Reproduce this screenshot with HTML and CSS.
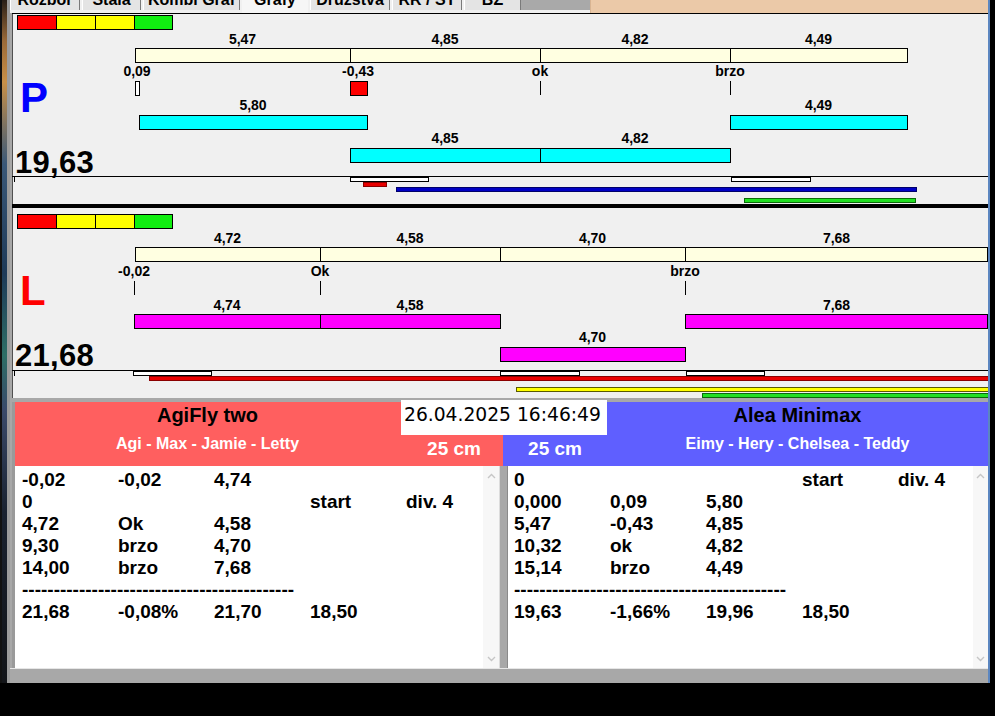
FILE: index.html
```html
<!DOCTYPE html>
<html lang="cs">
<head>
<meta charset="utf-8">
<title>Grafy</title>
<link rel="stylesheet" href="styles.css">
</head>
<body>
<div class="screen">
  <div class="desk"></div>
  <div class="win">
    <div class="tabs">
      <div class="tab w-rozbor"><span>Rozbor</span></div>
      <div class="tab w-stala"><span>Stala</span></div>
      <div class="tab w-kombi"><span>Kombi Graf</span></div>
      <div class="tab w-grafy on"><span>Grafy</span></div>
      <div class="tab w-druz"><span>Družstva</span></div>
      <div class="tab w-rr"><span>RR / ST</span></div>
      <div class="tab w-bz"><span>BZ</span></div>
      <div class="tab-gray"></div>
      <div class="tab-peach"></div>
    </div>

    <div class="charts">
      <div class="panel panel-p">
        <div class="legend"><i class="lg r"></i><i class="lg y"></i><i class="lg y"></i><i class="lg g"></i></div>

        <span class="lbl l1" style="left:230.5px">5,47</span>
        <span class="lbl l1" style="left:433px">4,85</span>
        <span class="lbl l1" style="left:623px">4,82</span>
        <span class="lbl l1" style="left:806.5px">4,49</span>
        <div class="bar cream scale" style="left:123px;width:216px"></div>
        <div class="bar cream scale" style="left:338px;width:191px"></div>
        <div class="bar cream scale" style="left:528px;width:191px"></div>
        <div class="bar cream scale" style="left:718px;width:178px"></div>

        <span class="lbl l2" style="left:125px">0,09</span>
        <span class="lbl l2" style="left:346px">-0,43</span>
        <span class="lbl l2" style="left:528px">ok</span>
        <span class="lbl l2" style="left:718px">brzo</span>
        <div class="bar mark white" style="left:123px;width:5px"></div>
        <div class="bar mark red" style="left:338px;width:18px"></div>
        <div class="tick mark" style="left:528px"></div>
        <div class="tick mark" style="left:718px"></div>

        <div class="side-letter">P</div>

        <span class="lbl l3" style="left:241px">5,80</span>
        <span class="lbl l3" style="left:806.5px">4,49</span>
        <div class="bar cyan ra" style="left:127px;width:229px"></div>
        <div class="bar cyan ra" style="left:718px;width:178px"></div>

        <span class="lbl l4" style="left:433px">4,85</span>
        <span class="lbl l4" style="left:623px">4,82</span>
        <div class="bar cyan rb" style="left:338px;width:191px"></div>
        <div class="bar cyan rb" style="left:528px;width:191px"></div>

        <div class="total">19,63</div>

        <div class="baseline"></div>
        <div class="base-tick"></div>
        <div class="slot" style="left:338px;width:79px"></div>
        <div class="slot" style="left:719px;width:80px"></div>
        <div class="run run-red lane1" style="left:351px;width:24px"></div>
        <div class="run run-blue lane2" style="left:384px;width:521px"></div>
        <div class="run run-green lane4" style="left:732px;width:172px"></div>
      </div>

      <div class="thick"></div>

      <div class="panel panel-l">
        <div class="legend"><i class="lg r"></i><i class="lg y"></i><i class="lg y"></i><i class="lg g"></i></div>

        <span class="lbl l1" style="left:215.5px">4,72</span>
        <span class="lbl l1" style="left:398px">4,58</span>
        <span class="lbl l1" style="left:580.5px">4,70</span>
        <span class="lbl l1" style="left:824.5px">7,68</span>
        <div class="bar cream scale" style="left:123px;width:186px"></div>
        <div class="bar cream scale" style="left:308px;width:181px"></div>
        <div class="bar cream scale" style="left:488px;width:186px"></div>
        <div class="bar cream scale" style="left:673px;width:303px"></div>

        <span class="lbl l2" style="left:122px">-0,02</span>
        <span class="lbl l2" style="left:308px">Ok</span>
        <span class="lbl l2" style="left:673px">brzo</span>
        <div class="tick mark" style="left:122px"></div>
        <div class="tick mark" style="left:308px"></div>
        <div class="tick mark" style="left:673px"></div>

        <div class="side-letter">L</div>

        <span class="lbl l3" style="left:215px">4,74</span>
        <span class="lbl l3" style="left:398px">4,58</span>
        <span class="lbl l3" style="left:824.5px">7,68</span>
        <div class="bar magenta ra" style="left:122px;width:187px"></div>
        <div class="bar magenta ra" style="left:308px;width:181px"></div>
        <div class="bar magenta ra" style="left:673px;width:303px"></div>

        <span class="lbl l4" style="left:580.5px">4,70</span>
        <div class="bar magenta rb" style="left:488px;width:186px"></div>

        <div class="total">21,68</div>

        <div class="baseline"></div>
        <div class="base-tick"></div>
        <div class="slot" style="left:121px;width:79px"></div>
        <div class="slot" style="left:488px;width:80px"></div>
        <div class="slot" style="left:674px;width:79px"></div>
        <div class="run run-red lane1" style="left:137px;width:845px"></div>
        <div class="run run-yellow lane3" style="left:504px;width:478px"></div>
        <div class="run run-green lane5" style="left:690px;width:292px"></div>
      </div>
    </div>

    <div class="gap"></div>

    <div class="bottom">
      <div class="heads">
        <div class="head head-red">
          <div class="head-title">
            <div class="team">AgiFly two</div>
            <div class="dogs">Agi - Max - Jamie - Letty</div>
          </div>
          <div class="head-cm">25 cm</div>
        </div>
        <div class="head head-blue">
          <div class="head-cm">25 cm</div>
          <div class="head-title">
            <div class="team">Alea Minimax</div>
            <div class="dogs">Eimy - Hery - Chelsea - Teddy</div>
          </div>
        </div>
        <div class="stamp">26.04.2025 16:46:49</div>
      </div>

      <div class="lists">
        <div class="list list-l">
          <div class="list-body">
            <div class="row"><span class="c">-0,02</span><span class="c">-0,02</span><span class="c">4,74</span></div>
            <div class="row"><span class="c">0</span><span class="c"></span><span class="c"></span><span class="c">start</span><span class="c">div. 4</span></div>
            <div class="row"><span class="c">4,72</span><span class="c">Ok</span><span class="c">4,58</span></div>
            <div class="row"><span class="c">9,30</span><span class="c">brzo</span><span class="c">4,70</span></div>
            <div class="row"><span class="c">14,00</span><span class="c">brzo</span><span class="c">7,68</span></div>
            <div class="row"><span class="dash">-------------------------------------------</span></div>
            <div class="row"><span class="c">21,68</span><span class="c">-0,08%</span><span class="c">21,70</span><span class="c">18,50</span></div>
          </div>
          <div class="scroll scroll-l">
            <svg width="9" height="6" viewBox="0 0 9 6"><polyline points="1,5 4.5,1.5 8,5" fill="none" stroke="#c6c6c6" stroke-width="1.4"/></svg>
            <svg width="9" height="6" viewBox="0 0 9 6"><polyline points="1,1 4.5,4.5 8,1" fill="none" stroke="#c6c6c6" stroke-width="1.4"/></svg>
          </div>
        </div>
        <div class="list-sep"></div>
        <div class="list list-r">
          <div class="list-body">
            <div class="row"><span class="c">0</span><span class="c"></span><span class="c"></span><span class="c">start</span><span class="c">div. 4</span></div>
            <div class="row"><span class="c">0,000</span><span class="c">0,09</span><span class="c">5,80</span></div>
            <div class="row"><span class="c">5,47</span><span class="c">-0,43</span><span class="c">4,85</span></div>
            <div class="row"><span class="c">10,32</span><span class="c">ok</span><span class="c">4,82</span></div>
            <div class="row"><span class="c">15,14</span><span class="c">brzo</span><span class="c">4,49</span></div>
            <div class="row"><span class="dash">-------------------------------------------</span></div>
            <div class="row"><span class="c">19,63</span><span class="c">-1,66%</span><span class="c">19,96</span><span class="c">18,50</span></div>
          </div>
          <div class="scroll scroll-r">
            <svg width="9" height="6" viewBox="0 0 9 6"><polyline points="1,5 4.5,1.5 8,5" fill="none" stroke="#c6c6c6" stroke-width="1.4"/></svg>
            <svg width="9" height="6" viewBox="0 0 9 6"><polyline points="1,1 4.5,4.5 8,1" fill="none" stroke="#c6c6c6" stroke-width="1.4"/></svg>
          </div>
        </div>
      </div>
    </div>

    <div class="frame-bottom"></div>
  </div>
</div>
</body>
</html>
```

FILE: styles.css
```css
* { box-sizing: border-box; }
html, body { margin: 0; padding: 0; }
body {
  width: 995px;
  height: 716px;
  overflow: hidden;
  background: #000;
  color: #000;
  font-family: "Liberation Sans", Arial, sans-serif;
}

.screen { display: flex; height: 683px; }

.desk {
  width: 7px;
  flex: none;
  background: linear-gradient(to bottom, #2a2018 0, #9a6a38 6%, #c89048 12%, #3a5878 24%, #1e3a58 40%, #2e6e66 52%, #3a4a6a 60%, #1a2230 75%, #121418 100%);
  border-left: 2px solid #111;
}

.win {
  width: 983px;
  flex: none;
  display: flex;
  flex-direction: column;
  background: #a8a8a8;
  border-left: 3px solid #9c9c9c;
  border-right: 2px solid #5b86c0;
}

/* tabs */
.tabs { height: 13px; display: flex; background: #f0f0f0; flex: none; }
.tab {
  height: 10px;
  overflow: hidden;
  background: #e4e4e4;
  border-left: 1px solid #ffffff;
  border-right: 1px solid #7a7a7a;
  margin-right: 2px;
  font: bold 16px/16px "Liberation Sans", Arial, sans-serif;
  text-align: center;
  white-space: nowrap;
  flex: none;
}
.tab span { display: block; margin-top: -8px; }
.tab.on { height: 13px; background: #f6f6f6; border-color: #f6f6f6; }
.w-rozbor { width: 70px; }
.w-stala { width: 59px; }
.w-kombi { width: 97px; }
.w-grafy { width: 66px; }
.w-druz { width: 80px; }
.w-rr { width: 70px; }
.w-bz { width: 57px; margin-right: 0; }
.tab-gray { width: 69px; height: 10px; background: #a9a9a9; flex: none; }
.tab-peach { flex: 1; height: 13px; background: #ebc9a8; border-left: 1px solid #d8b492; }

/* charts */
.charts {
  margin-left: 2px;
  width: 976px;
  border-top: 1px solid #000;
  flex: none;
}
.panel {
  position: relative;
  height: 190px;
  overflow: hidden;
  background: #f0f0f0;
  box-shadow: inset 1px 0 0 #505050;
}
.thick { height: 4px; background: #000; }

.legend { position: absolute; left: 5px; display: flex; }
.lg { display: block; width: 39px; height: 15px; border: 1px solid #000; border-right: none; }
.lg:last-child { border-right: 1px solid #000; }
.lg.r { background: #ff0000; }
.lg.y { background: #ffff00; }
.lg.g { background: #11ee11; }

.lbl {
  position: absolute;
  transform: translateX(-50%);
  font: bold 14px/14px "Liberation Sans", Arial, sans-serif;
  white-space: nowrap;
}

.bar { position: absolute; height: 15px; border: 1px solid #000; }
.cream { background: #ffffe1; }
.cyan { background: #00ffff; }
.magenta { background: #ff00ff; }
.bar.white { background: #ffffff; }
.bar.red { background: #ff0000; }
.tick { position: absolute; width: 1px; height: 14px; background: #000; }

.side-letter {
  position: absolute;
  left: 8px;
  font: bold 42px/42px "Liberation Sans", Arial, sans-serif;
}
.total {
  position: absolute;
  left: 3px;
  font: bold 31px/31px "Liberation Sans", Arial, sans-serif;
  letter-spacing: 0.3px;
}

.baseline { position: absolute; left: 0; top: 162px; width: 100%; height: 1px; background: #000; }
.base-tick { position: absolute; left: 2px; top: 162px; width: 1px; height: 6px; background: #000; }
.slot { position: absolute; top: 163px; height: 5px; background: #fff; border: 1px solid #000; }
.run { position: absolute; height: 5px; border: 1px solid #000; }
.run-red { background: #e80000; border-color: #8a0000; }
.run-blue { background: #0000c4; border-color: #00006a; }
.run-green { background: #22e022; border-color: #0a6a0a; }
.run-yellow { background: #ffff00; border-color: #5a5a00; }
.lane1 { top: 168px; }
.lane2 { top: 173px; }
.lane3 { top: 179px; }
.lane4 { top: 184px; }
.lane5 { top: 185px; }

/* per-panel vertical placement */
.panel-p .legend { top: 1px; }
.panel-l .legend { top: 6px; }
.panel-p .l1 { top: 18px; }
.panel-l .l1 { top: 23px; }
.panel-p .scale { top: 34px; }
.panel-l .scale { top: 39px; }
.panel-p .l2 { top: 50px; }
.panel-l .l2 { top: 56px; }
.panel-p .mark { top: 67px; }
.panel-l .mark { top: 73px; }
.panel-p .l3 { top: 84px; }
.panel-l .l3 { top: 90px; }
.panel-p .ra { top: 101px; }
.panel-l .ra { top: 106px; }
.panel-p .l4 { top: 117px; }
.panel-l .l4 { top: 122px; }
.panel-p .rb { top: 134px; }
.panel-l .rb { top: 139px; }
.panel-p .side-letter { top: 63px; color: #0000ff; }
.panel-l .side-letter { top: 62px; color: #ff0000; }
.panel-p .total { top: 133px; }
.panel-l .total { top: 132px; }

.gap { height: 4px; flex: none; }

/* bottom: teams and result lists */
.bottom {
  margin-left: 2px;
  border-left: 3px solid #9a9a9a;
  display: flex;
  flex-direction: column;
  flex: none;
}
.heads { display: flex; height: 64px; position: relative; }
.head { display: flex; height: 64px; flex: none; }
.head-red { width: 488px; background: #ff5f5f; }
.head-blue { width: 485px; background: #5f5fff; }
.head-red .head-title { width: 385px; }
.head-red .head-cm { width: 103px; padding-left: 5px; }
.head-blue .head-cm { width: 104px; }
.head-blue .head-title { width: 381px; }
.head-title { text-align: center; white-space: nowrap; flex: none; }
.team { font: bold 20px/26px "Liberation Sans", Arial, sans-serif; color: #000; }
.dogs { font: bold 16px/20px "Liberation Sans", Arial, sans-serif; color: #fff; margin-top: 6px; }
.head-cm {
  font: bold 19px/19px "Liberation Sans", Arial, sans-serif;
  color: #fff;
  text-align: center;
  padding-top: 37px;
  white-space: nowrap;
  flex: none;
}
.stamp {
  position: absolute;
  left: 386px;
  top: -2px;
  width: 206px;
  height: 35px;
  background: #fff;
  padding-left: 3px;
  font: 18.7px/29px "DejaVu Sans", Verdana, sans-serif;
  color: #000;
  white-space: nowrap;
}

.lists { display: flex; height: 202px; }
.list { display: flex; background: #fff; height: 202px; flex: none; }
.list-l { width: 485px; }
.list-r { width: 481px; border-left: 1px solid #8a8a8a; }
.list-sep { width: 7px; background: #a8a8a8; flex: none; }
.list-body {
  flex: 1 1 0;
  min-width: 0;
  overflow: hidden;
  padding: 3px 0 0 7px;
  font: bold 19px/22px "Liberation Sans", Arial, sans-serif;
}
.list-r .list-body { padding-left: 6px; }
.row { display: flex; height: 22px; white-space: nowrap; }
.c { width: 96px; flex: none; }
.dash { white-space: nowrap; }
.scroll {
  flex: none;
  background: #f7f7f7;
  display: flex;
  flex-direction: column;
  justify-content: space-between;
  align-items: center;
  padding: 7px 0 6px;
}
.scroll svg { display: block; }
.scroll-l { width: 17px; border-right: 1px solid #dcdcdc; }
.scroll-r { width: 15px; }

.frame-bottom {
  height: 15px;
  flex: none;
  background: #a8a8a8;
  border-top: 1px solid #e6e6e6;
}
```
